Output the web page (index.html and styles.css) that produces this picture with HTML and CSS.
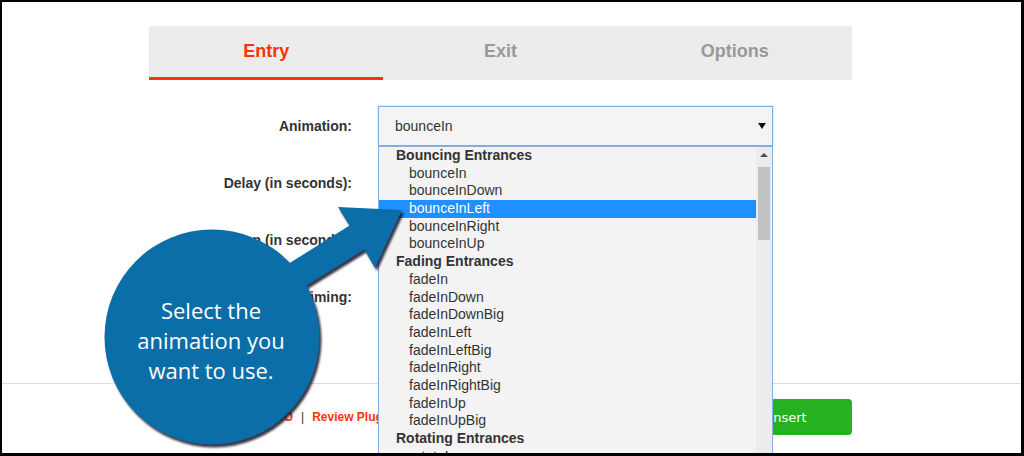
FILE: index.html
```html
<!DOCTYPE html>
<html lang="en">
<head>
    <meta charset="UTF-8">
    <title>Animation Settings</title>
    <link rel="stylesheet" href="styles.css">
</head>
<body>
    <div class="frame">
        <div class="page">
            <div class="panel">
                <div class="tabs">
                    <div class="tab active">Entry</div>
                    <div class="tab">Exit</div>
                    <div class="tab">Options</div>
                </div>

                <div class="fields">
                    <div class="field">
                        <label>Animation:</label>
                        <div class="select"><span>bounceIn</span><i class="caret"></i></div>
                    </div>
                    <div class="field">
                        <label>Delay (in seconds):</label>
                        <div class="input"></div>
                    </div>
                    <div class="field">
                        <label>Duration (in seconds):</label>
                        <div class="input"></div>
                    </div>
                    <div class="field">
                        <label>Timing:</label>
                        <div class="input"></div>
                    </div>
                </div>
            </div>
        </div>

        <div class="footer">
            <div class="footer-inner">
                <div class="links">
                    <a>Go PRO</a><span class="sep">|</span><a>Review Plugin</a>
                </div>
                <button class="insert">Insert</button>
            </div>
        </div>

        <!-- open dropdown of the animation select -->
        <div class="dropdown">
            <div class="options">
                <div class="group">Bouncing Entrances</div>
                <div class="item">bounceIn</div>
                <div class="item">bounceInDown</div>
                <div class="item selected">bounceInLeft</div>
                <div class="item">bounceInRight</div>
                <div class="item">bounceInUp</div>
                <div class="group">Fading Entrances</div>
                <div class="item">fadeIn</div>
                <div class="item">fadeInDown</div>
                <div class="item">fadeInDownBig</div>
                <div class="item">fadeInLeft</div>
                <div class="item">fadeInLeftBig</div>
                <div class="item">fadeInRight</div>
                <div class="item">fadeInRightBig</div>
                <div class="item">fadeInUp</div>
                <div class="item">fadeInUpBig</div>
                <div class="group">Rotating Entrances</div>
                <div class="item">rotateIn</div>
            </div>
            <div class="scrollbar">
                <i class="up"></i>
                <div class="thumb"></div>
            </div>
        </div>

        <!-- callout bubble with arrow -->
        <svg class="callout-shape" viewBox="2 2 1019 451" width="1019" height="451">
            <polygon points="222.6,304.8 349.6,225.6 338,207 402,210 375,268 364.4,249.4 237.4,328.6" fill="#0b6ea8"/>
            <circle cx="212" cy="337" r="107.5" fill="#0b6ea8"/>
        </svg>
        <div class="callout-text">Select the<br>animation you<br>want to use.</div>
    </div>
</body>
</html>
```

FILE: styles.css
```css
body {
    margin: 0;
    font-family: "Liberation Sans", Arial, sans-serif;
    background: #fff;
}
.frame {
    position: relative;
    width: 1024px;
    height: 456px;
    box-sizing: border-box;
    border-style: solid;
    border-color: #000;
    border-width: 2px 3px 3px 2px;
    overflow: hidden;
    background: #fff;
}
.page {
    height: 382px;
    box-sizing: border-box;
    border-bottom: 1px solid #dddddd;
}
.panel {
    margin-left: 147px;
    width: 703px;
    padding-top: 24px;
}
.tabs {
    display: flex;
    height: 54px;
    background: #ececec;
}
.tab {
    flex: 1;
    text-align: center;
    font-size: 18px;
    font-weight: bold;
    line-height: 51px;
    color: #999;
    border-bottom: 3px solid transparent;
}
.tab.active {
    color: #ff3300;
    border-bottom-color: #ff3300;
}
.fields {
    margin-top: 26px;
}
.field {
    display: flex;
    align-items: center;
    height: 40px;
    margin-bottom: 17px;
}
label {
    width: 203px;
    margin-right: 26px;
    text-align: right;
    font-size: 14px;
    font-weight: bold;
    color: #333;
}
.select, .input {
    width: 395px;
    height: 40px;
    box-sizing: border-box;
    border: 1px solid #cfcfcf;
    background: #f4f4f4;
}
.select {
    display: flex;
    align-items: center;
    justify-content: space-between;
    padding: 0 6px 0 16px;
    border-color: #7eaee3;
    box-shadow: 0 0 2px #a9cbef;
    font-size: 14px;
    color: #333;
}
.caret {
    width: 0;
    height: 0;
    border-left: 4px solid transparent;
    border-right: 4px solid transparent;
    border-top: 6px solid #111;
}
.footer {
    height: 69px;
}
.footer-inner {
    margin-left: 147px;
    width: 703px;
    padding-top: 15px;
    display: flex;
    align-items: center;
    justify-content: space-between;
}
.links {
    padding-left: 98px;
    font-size: 12px;
    font-weight: bold;
    color: #ff3300;
}
.sep {
    margin: 0 8px;
    color: #333;
    font-weight: normal;
}
.insert {
    width: 128px;
    height: 36px;
    border: none;
    border-radius: 4px;
    background: #26b120;
    color: #fff;
    font-family: "DejaVu Sans", sans-serif;
    font-size: 13px;
}
.dropdown {
    position: absolute;
    left: 376px;
    top: 144px;
    width: 395px;
    height: 330px;
    box-sizing: border-box;
    display: flex;
    border: 1px solid #86aee0;
    background: #f3f3f3;
    font-size: 14px;
    color: #333;
}
.options {
    flex: 1;
}
.group, .item {
    height: 17.7px;
    line-height: 17.7px;
    white-space: nowrap;
}
.group {
    padding-left: 17px;
    font-weight: bold;
}
.item {
    padding-left: 30px;
}
.item.selected {
    background: #1e90ff;
    color: #fff;
}
.scrollbar {
    position: relative;
    width: 16px;
    background: #ececec;
}
.scrollbar .up {
    position: absolute;
    left: 4px;
    top: 6px;
    width: 0;
    height: 0;
    border-left: 4px solid transparent;
    border-right: 4px solid transparent;
    border-bottom: 4px solid #505050;
}
.thumb {
    position: absolute;
    left: 2px;
    top: 20px;
    width: 12px;
    height: 73px;
    background: #c2c2c2;
}
.callout-shape {
    position: absolute;
    left: 0;
    top: 0;
    overflow: visible;
    filter: drop-shadow(2px 3px 1px rgba(20, 20, 40, 0.85));
}
.callout-text {
    position: absolute;
    left: 99px;
    top: 292.5px;
    width: 220px;
    text-align: center;
    font-family: "Open Sans", sans-serif;
    font-size: 22px;
    line-height: 30px;
    color: #fff;
}
```
